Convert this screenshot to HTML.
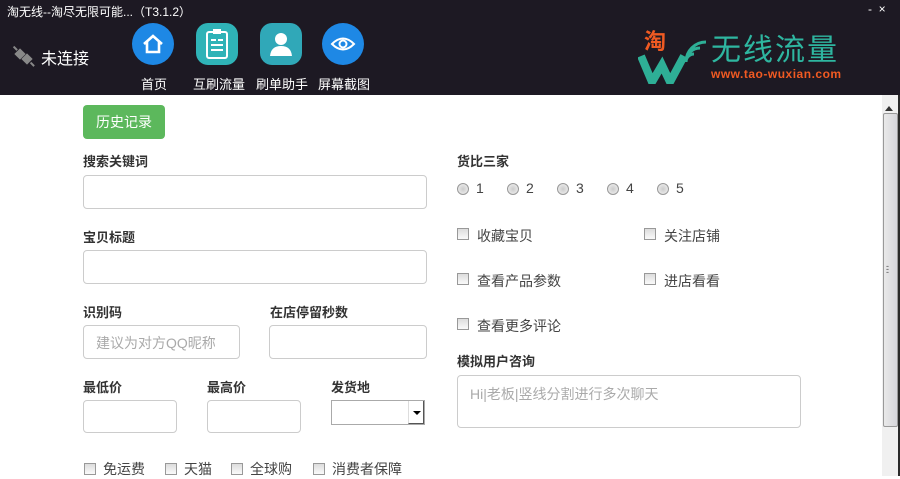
<!DOCTYPE html>
<html><head><meta charset="utf-8"><style>
*{margin:0;padding:0;box-sizing:border-box}
body{width:900px;height:476px;overflow:hidden;background:#fff;font-family:"Liberation Sans","Microsoft YaHei","Noto Sans CJK SC",sans-serif;position:relative}
.hdr{position:absolute;left:0;top:0;width:900px;height:95px;background:#1d1923}
.ab{position:absolute}
.t{color:#fff;font-size:13px}
.ic{position:absolute;top:23px;width:42px;height:42px;border-radius:50%}
.lbl{position:absolute;font-size:13px;color:#333;font-weight:bold}
.inp{position:absolute;border:1px solid #ccc;border-radius:4px;background:#fff}
.cb{position:absolute;width:12px;height:12px;border:1px solid #999;background:linear-gradient(#ddd,#fafafa)}
.ct{position:absolute;font-size:14px;color:#444}
.rd{position:absolute;width:12px;height:12px;border-radius:50%;border:1px solid #999;background:radial-gradient(#ccc,#f3f3f3)}
</style></head><body>
<div class="hdr"></div>
<div class="ab t" style="left:7px;top:3px;font-size:12px">淘无线--淘尽无限可能...（T3.1.2）</div>
<div class="ab t" style="left:868px;top:2px;font-size:12px">- &nbsp;×</div>
<svg class="ab" style="left:12px;top:44px" width="24" height="24" viewBox="0 0 24 24"><g fill="#888"><rect x="4" y="6" width="8" height="8" transform="rotate(45 8 10)"/><rect x="11" y="11" width="8" height="8" transform="rotate(45 15 15)"/><rect x="1" y="3" width="5" height="2" transform="rotate(45 3 4)"/><rect x="18" y="19" width="5" height="2" transform="rotate(45 20 20)"/></g></svg>
<div class="ab t" style="left:41px;top:45px;font-size:16px">未连接</div>
<div class="ic" style="left:132px;background:#1e88e5"></div>
<svg class="ab" style="left:140px;top:31px" width="26" height="26" viewBox="0 0 26 26"><path d="M4 13 L13 5 L22 13 M7 11 V21 H19 V11" fill="none" stroke="#fff" stroke-width="2.6"/></svg>
<div class="ic" style="left:196px;background:#2fb3b7;border-radius:12px"></div>
<svg class="ab" style="left:205px;top:28px" width="24" height="32" viewBox="0 0 24 32"><rect x="2" y="4" width="20" height="26" rx="2" fill="none" stroke="#fff" stroke-width="2"/><rect x="8" y="1" width="8" height="5" fill="#fff"/><path d="M6 12h5M13 12h5M6 17h12M6 22h12" stroke="#fff" stroke-width="2"/></svg>
<div class="ic" style="left:260px;background:#30a8b8;border-radius:12px"></div>
<svg class="ab" style="left:268px;top:30px" width="26" height="28" viewBox="0 0 26 28"><circle cx="13" cy="9" r="6" fill="#fff"/><path d="M2 26 Q3 16 13 16 Q23 16 24 26Z" fill="#fff"/></svg>
<div class="ic" style="left:322px;background:#1e88e5"></div>
<svg class="ab" style="left:330px;top:35px" width="26" height="18" viewBox="0 0 26 18"><path d="M2 9 Q13 -2 24 9 Q13 20 2 9Z" fill="none" stroke="#fff" stroke-width="2"/><circle cx="13" cy="9" r="3.5" fill="none" stroke="#fff" stroke-width="2"/></svg>
<div class="ab t" style="left:141px;top:74px">首页</div>
<div class="ab t" style="left:193px;top:74px">互刷流量</div>
<div class="ab t" style="left:256px;top:74px">刷单助手</div>
<div class="ab t" style="left:318px;top:74px">屏幕截图</div>
<div class="ab" style="left:644px;top:30px;color:#f05a22;font-size:22px;line-height:24px;font-weight:bold">淘</div>
<svg class="ab" style="left:638px;top:52px" width="54" height="32" viewBox="0 0 54 32"><path d="M3 4 L14 30 L24 13 L32 30 L46 4" fill="none" stroke="#2eaf96" stroke-width="8"/></svg>
<svg class="ab" style="left:682px;top:40px" width="28" height="26" viewBox="0 0 28 26"><path d="M4 22 A8 8 0 0 1 12 14 M4 22 A14 14 0 0 1 18 8 M4 22 A20 20 0 0 1 24 2" fill="none" stroke="#2eaf96" stroke-width="3"/></svg>
<div class="ab" style="left:711px;top:36px;color:#2eb6a0;font-size:30px;line-height:30px;letter-spacing:2px">无线流量</div>
<div class="ab" style="left:711px;top:67px;color:#f05a22;font-size:12px;line-height:14px;font-weight:bold;letter-spacing:0.5px">www.tao-wuxian.com</div>

<div class="ab" style="left:83px;top:105px;width:82px;height:34px;background:#5cb85c;border-radius:4px;color:#fff;font-size:14px;text-align:center;line-height:34px">历史记录</div>
<div class="lbl" style="left:83px;top:151px">搜索关键词</div>
<div class="inp" style="left:83px;top:175px;width:344px;height:34px"></div>
<div class="lbl" style="left:83px;top:227px">宝贝标题</div>
<div class="inp" style="left:83px;top:250px;width:344px;height:34px"></div>
<div class="lbl" style="left:83px;top:302px">识别码</div>
<div class="inp" style="left:83px;top:325px;width:157px;height:34px;color:#aaa;font-size:14px;padding:7px 12px">建议为对方QQ昵称</div>
<div class="lbl" style="left:270px;top:302px">在店停留秒数</div>
<div class="inp" style="left:269px;top:325px;width:158px;height:34px"></div>
<div class="lbl" style="left:83px;top:377px">最低价</div>
<div class="inp" style="left:83px;top:400px;width:94px;height:33px"></div>
<div class="lbl" style="left:207px;top:377px">最高价</div>
<div class="inp" style="left:207px;top:400px;width:94px;height:33px"></div>
<div class="lbl" style="left:331px;top:377px">发货地</div>
<div class="ab" style="left:331px;top:400px;width:94px;height:25px;border:1px solid #aaa;background:#fff"><div style="position:absolute;right:0;top:0;width:16px;height:23px;border-left:1px solid #ddd;border-right:1px solid #555;border-bottom:1px solid #555"><div style="position:absolute;left:4px;top:10px;border:4px solid transparent;border-top:4px solid #000"></div></div></div>
<div class="cb" style="left:84px;top:463px"></div><div class="ct" style="left:103px;top:459px">免运费</div>
<div class="cb" style="left:165px;top:463px"></div><div class="ct" style="left:184px;top:459px">天猫</div>
<div class="cb" style="left:231px;top:463px"></div><div class="ct" style="left:250px;top:459px">全球购</div>
<div class="cb" style="left:313px;top:463px"></div><div class="ct" style="left:332px;top:459px">消费者保障</div>

<div class="lbl" style="left:457px;top:151px">货比三家</div>
<div class="rd" style="left:457px;top:183px"></div><div class="ct" style="left:476px;top:180px">1</div>
<div class="rd" style="left:507px;top:183px"></div><div class="ct" style="left:526px;top:180px">2</div>
<div class="rd" style="left:557px;top:183px"></div><div class="ct" style="left:576px;top:180px">3</div>
<div class="rd" style="left:607px;top:183px"></div><div class="ct" style="left:626px;top:180px">4</div>
<div class="rd" style="left:657px;top:183px"></div><div class="ct" style="left:676px;top:180px">5</div>
<div class="cb" style="left:457px;top:228px"></div><div class="ct" style="left:477px;top:226px">收藏宝贝</div>
<div class="cb" style="left:644px;top:228px"></div><div class="ct" style="left:664px;top:226px">关注店铺</div>
<div class="cb" style="left:457px;top:273px"></div><div class="ct" style="left:477px;top:271px">查看产品参数</div>
<div class="cb" style="left:644px;top:273px"></div><div class="ct" style="left:664px;top:271px">进店看看</div>
<div class="cb" style="left:457px;top:318px"></div><div class="ct" style="left:477px;top:316px">查看更多评论</div>
<div class="lbl" style="left:457px;top:351px">模拟用户咨询</div>
<div class="inp" style="left:457px;top:375px;width:344px;height:53px;color:#aaa;font-size:14px;padding:8px 12px">Hi|老板|竖线分割进行多次聊天</div>

<div class="ab" style="left:882px;top:95px;width:18px;height:381px;background:#f0f0f0;border-right:2px solid #2a2a2a"></div>
<div class="ab" style="left:885px;top:98px;width:0;height:0;border:4px solid transparent;border-bottom:5px solid #333;margin-top:4px"></div>
<div class="ab" style="left:883px;top:113px;width:15px;height:314px;border:1px solid #999;border-radius:2px;background:linear-gradient(90deg,#e9e9e9,#d6d6db)"></div>
<div class="ab" style="left:886px;top:265px;font-size:9px;color:#555;line-height:3px">-<br>-<br>-</div>
</body></html>
